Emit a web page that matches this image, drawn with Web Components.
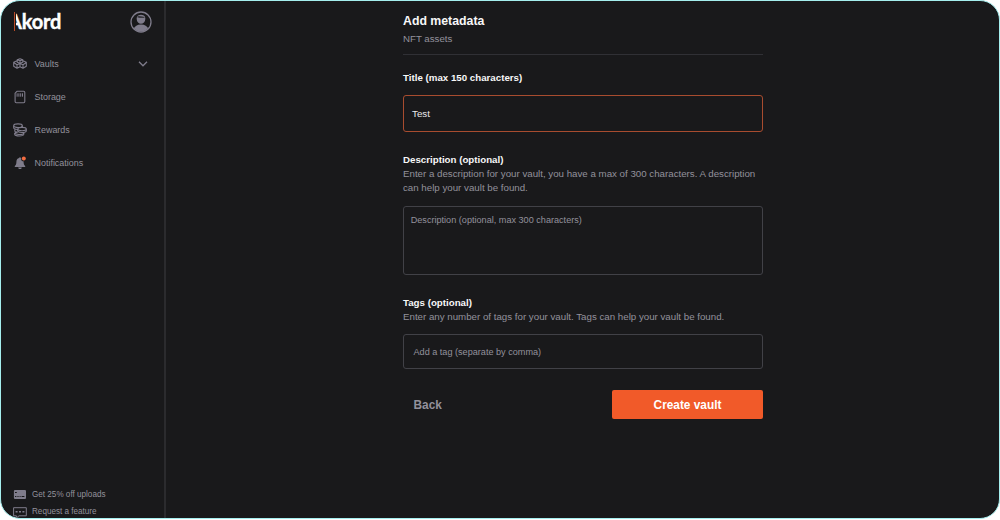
<!DOCTYPE html>
<html lang="en">
<head>
<meta charset="utf-8">
<title>Akord</title>
<style>
html,body{margin:0;background:#fff;height:520px;overflow:hidden}
body{font-family:"Liberation Sans",Arial,sans-serif;color:#93919c}
</style>
</head>
<body>
<akord-app></akord-app>
<script>
const icons = {
  vault:`<svg width="14" height="12" viewBox="0 0 14 12" fill="none" stroke="currentColor" stroke-width="1.1" stroke-linejoin="round"><path d="M4.2 1.7 7 .7l2.8 1v2.5L7 5.2 4.2 4.2zM4.2 1.7 7 2.8l2.8-1.1M7 2.8v2.4M4 2.7.7 4.2v4L4 10.2l3-1.5V5.4L4 6.7.7 4.5M4 6.7v3.5M10 2.7l3.3 1.5v4L10 10.2 7 8.7M7 5.4l3 1.3 3.3-2.2M10 6.7v3.5"/></svg>`,
  storage:`<svg width="14" height="14" viewBox="0 0 14 14" fill="none" stroke="currentColor"><path d="M4 1.3h6.6a1.2 1.2 0 0 1 1.2 1.2v9a1.2 1.2 0 0 1-1.2 1.2H3.3a1.2 1.2 0 0 1-1.2-1.2V3.2z" stroke-width="1.1"/><path d="M4.1 3.3v3.4M5.9 3.3v3.4M7.7 3.3v3.4M9.5 3.3v3.4" stroke-width="1"/></svg>`,
  rewards:`<svg width="14" height="14" viewBox="0 0 14 14" fill="none" stroke="currentColor" stroke-width="1.1"><ellipse cx="5" cy="2.7" rx="4.3" ry="1.8"/><path d="M.7 2.8v2c0 1 1.7 1.6 4 1.7M9.3 2.8v1.6M1.8 6.4v1.8c.4.6 1.3 1 2.7 1.2M1.7 10.1v1.3c.4 2.1 8.8 2.1 9.1-.1v-1.2"/><ellipse cx="9" cy="6.1" rx="4.3" ry="1.7"/><path d="M4.7 6.2v1.7c.6 2.2 8.2 2 8.6-.1V6.2"/><path d="M4.5 9.1c-3.4 0-3.7 2.2 1.4 2.4 2.6.1 4.7-.5 4.9-1.4"/></svg>`,
  bell:`<svg width="14" height="14" viewBox="0 0 14 14"><path fill="currentColor" d="M7 1.2c.6 0 .9.4.9.9 1.8.5 2.7 1.9 2.7 3.6 0 2.4.6 3.4 1.5 4.2.4.4.1 1.1-.5 1.1H2.4c-.6 0-.9-.7-.5-1.1.9-.8 1.5-1.8 1.5-4.2 0-1.7.9-3.1 2.7-3.6 0-.5.3-.9.9-.9zM5.2 11.6h3.6c0 2-3.6 2-3.6 0z"/><circle cx="10.7" cy="2.7" r="2.6" fill="#19191b"/><circle cx="10.8" cy="2.6" r="2" fill="#f36c41"/></svg>`,
  card:`<svg width="14" height="11" viewBox="0 0 14 11"><rect x=".9" y="1" width="12.1" height="9" rx="1.1" fill="currentColor"/><path d="M2 3.5h1.8M2 7.5h1.4M4.4 7.5h1.2M6.6 7.5h1M8.6 7.5h2.8" stroke="#19191b" stroke-width="1"/></svg>`,
  chat:`<svg width="14" height="13" viewBox="0 0 14 13" fill="none" stroke="currentColor"><path d="M.6 1.7h12.7v8.1H6L3.4 12V9.8H.6z" stroke-width="1"/><path d="M2.6 5.7h2M6 5.7h2M9.4 5.7h2" stroke-width="1.6"/></svg>`,
  down:`<svg width="10" height="8" viewBox="0 0 10 8" fill="none" stroke="currentColor" stroke-width="1.3"><path d="M1 1.8 5 5.8 9 1.8"/></svg>`,
  user:`<svg width="22" height="22" viewBox="0 0 22 22"><defs><clipPath id="c"><circle cx="11" cy="11" r="9.6"/></clipPath></defs><circle cx="11" cy="11" r="10" fill="none" stroke="currentColor" stroke-width="1.3"/><g fill="currentColor" clip-path="url(#c)"><ellipse cx="11" cy="18.6" rx="7.2" ry="5"/><path d="M6.7 7c.3-4.2 8.3-4.2 8.6 0v1c.1 6.4-8.7 6.4-8.6 0z"/><path d="M7.4 5.6c2-.7 4.4-.2 7 .5v.7c-3-.1-4.8.2-7-.5z" fill="#222226"/></g></svg>`
};
const define = (name, template) => customElements.define(name, class extends HTMLElement {
  constructor(){ super(); this.attachShadow({mode:'open'}); }
  connectedCallback(){ this.shadowRoot.innerHTML = template(this); }
});
define('ui-icon', e => `<style>:host{display:flex;align-items:center;justify-content:center;color:#7f7c8b}svg{display:block}</style>${icons[e.getAttribute('name')]}`);
define('nav-item', () => `<style>:host{display:flex;height:33px;align-items:center;font-size:8.95px;line-height:12px}.label{flex:1}</style><slot name="icon"></slot><span class="label"><slot></slot></span><slot name="end"></slot>`);
define('footer-link', () => `<style>:host{display:flex;height:17.5px;align-items:center;font-size:8.15px;gap:5px;line-height:12px}</style><slot name="icon"></slot><span><slot></slot></span>`);
define('brand-logo', () => `<style>:host{display:flex;position:relative;height:20px;align-items:center;font:700 20px/20px Lato,sans-serif;letter-spacing:-.15px;color:#fff}span{margin:-2px 0 0 -6px;-webkit-text-stroke:.4px #fff}i{position:absolute;left:-8px;top:-1px;width:10px;height:22px;background:#19191b}em{position:absolute;left:0;top:0;width:1px;height:19px;background:#b94b27}</style><span>Akord</span><i></i><em></em>`);
define('app-sidebar', () => `<style>
:host{display:flex;flex-direction:column;box-sizing:border-box;width:165px;border-right:2px solid #2b2b2e;padding:10px 14px 0 12px}
header{display:flex;align-items:center;justify-content:space-between;height:22px;padding-left:1px}
nav{margin-top:14px}nav ui-icon[slot=icon]{width:14px;margin-right:7.5px}
ui-icon[slot=end]{margin-right:2px}header ui-icon{margin-right:-2px}
footer{margin-top:auto;margin-bottom:-3px}footer-link ui-icon{width:14px}
</style><header><brand-logo></brand-logo><ui-icon name="user"></ui-icon></header>
<nav><nav-item><ui-icon slot="icon" name="vault"></ui-icon>Vaults<ui-icon slot="end" name="down"></ui-icon></nav-item>
<nav-item><ui-icon slot="icon" name="storage"></ui-icon>Storage</nav-item>
<nav-item><ui-icon slot="icon" name="rewards"></ui-icon>Rewards</nav-item>
<nav-item><ui-icon slot="icon" name="bell"></ui-icon>Notifications</nav-item></nav>
<footer><footer-link><ui-icon slot="icon" name="card"></ui-icon>Get 25% off uploads</footer-link><footer-link><ui-icon slot="icon" name="chat"></ui-icon>Request a feature</footer-link></footer>`);
define('field-heading', () => `<style>:host{display:block;font-size:9.72px;line-height:14px}b{display:block;color:#f7f7f8}p{margin:0}</style><b><slot name="title"></slot></b><p><slot></slot></p>`);
define('form-box', () => `<style>:host{display:flex;box-sizing:border-box;border:1px solid #414147;border-radius:3px;font-size:9.12px;line-height:14px}:host([active]){border-color:#a84c2f;color:#e9e9eb;font-size:9.75px}</style><slot></slot>`);
define('form-button', () => `<style>:host{display:flex;align-items:center;justify-content:center;box-sizing:border-box;height:29px;padding-top:1px;font-size:11.85px;line-height:16px;font-weight:700}:host([primary]){width:151px;background:#f15a29;color:#fff;border-radius:2px}</style><slot></slot>`);
define('metadata-form', () => `<style>
:host{display:flex;flex-direction:column;width:360px;padding-top:12px}
h1{margin:0;font-size:12.3px;line-height:16px;color:#f7f7f8}.sub{font-size:9.7px;line-height:12px;margin-top:4px}
hr{width:100%;height:1px;border:0;background:#303035;margin:9px 0 16px}
.title{margin-bottom:10px}.t{height:37px;padding:0 8px;align-items:center}
.desc{margin-top:20.5px}.d{height:69px;margin-top:11.5px;padding:6px 6.7px}
.tags{margin-top:20.5px}.g{height:35px;margin-top:10px;padding:1px 9.5px 0;align-items:center}
.actions{display:flex;justify-content:space-between;margin-top:21px;padding-left:10.5px}
</style><h1>Add metadata</h1><div class="sub">NFT assets</div><hr>
<field-heading class="title"><span slot="title">Title (max 150 characters)</span></field-heading>
<form-box class="t" active>Test</form-box>
<field-heading class="desc"><span slot="title">Description (optional)</span>Enter a description for your vault, you have a max of 300 characters. A description<br>can help your vault be found.</field-heading>
<form-box class="d">Description (optional, max 300 characters)</form-box>
<field-heading class="tags"><span slot="title">Tags (optional)</span>Enter any number of tags for your vault. Tags can help your vault be found.</field-heading>
<form-box class="g">Add a tag (separate by comma)</form-box>
<div class="actions"><form-button>Back</form-button><form-button primary>Create vault</form-button></div>`);
define('akord-app', () => `<style>:host{display:grid;grid-template-columns:165px 1fr;box-sizing:border-box;width:1000px;height:519px;border:1px solid #a5eeee;border-radius:20px;background:#19191b;overflow:hidden}main{display:flex;justify-content:center;padding-left:1px}</style><app-sidebar></app-sidebar><main><metadata-form></metadata-form></main>`);
</script>
</body>
</html>
